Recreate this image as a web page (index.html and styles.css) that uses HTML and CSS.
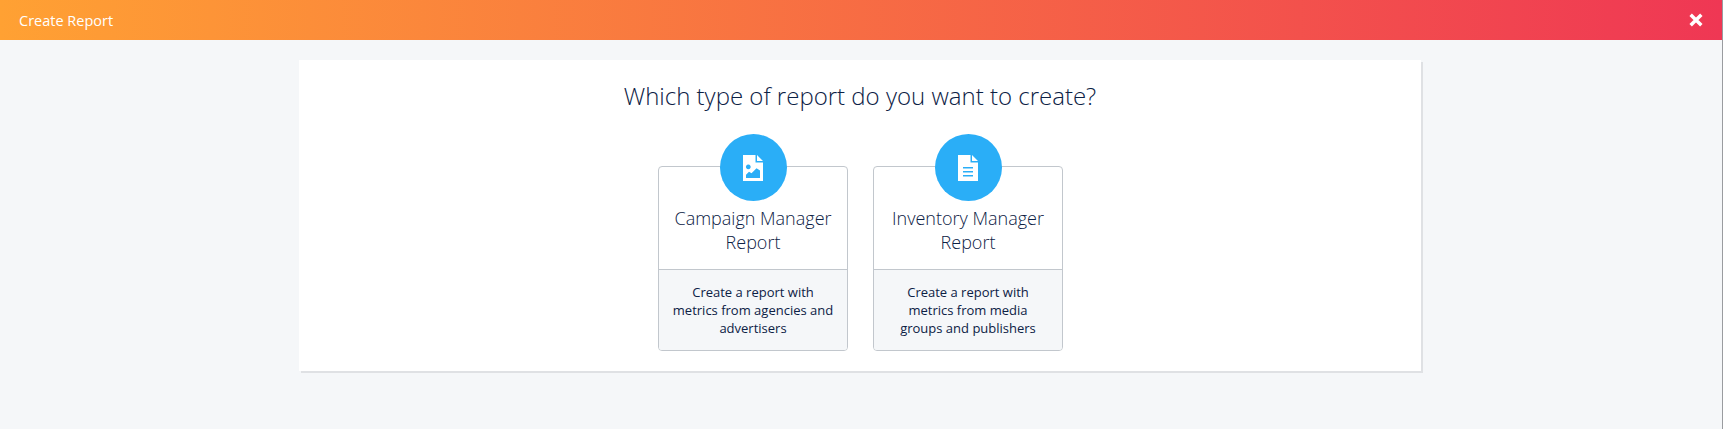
FILE: index.html
```html
<!DOCTYPE html>
<html lang="en">
<head>
<meta charset="utf-8">
<title>Create Report</title>
<link rel="stylesheet" href="styles.css">
</head>
<body>
<header class="topbar">
  <span class="topbar-title">Create Report</span>
  <svg class="close" viewBox="0 0 12 12" aria-label="Close"><path d="M2 2l8 8M10 2l-8 8"/></svg>
</header>
<main class="page">
  <section class="panel">
    <h1 class="question">Which type of report do you want to create?</h1>
    <div class="cards">
      <article class="card">
        <div class="badge">
          <svg class="doc" viewBox="0 0 20 26"><path fill-rule="evenodd" d="M0 0h12.500v7.500H20V26H0zM14 0l6 6h-6zM5.300 9.500a2.400 2.400 0 1 0 .01 0zM3 23h14v-7.500l-3.500-2.300-5 5-2.500-1.500-3 3z"/></svg>
        </div>
        <div class="card-head"><h2 class="card-title">Campaign Manager Report</h2></div>
        <p class="card-body">Create a report with metrics from agencies and advertisers</p>
      </article>
      <article class="card">
        <div class="badge">
          <svg class="doc" viewBox="0 0 20 26"><path fill-rule="evenodd" d="M0 0h12.500v7.500H20V26H0zM14 0l6 6h-6zM5 12v1.600h10V12zM5 16v1.600h10V16zM5 20v1.600h10V20z"/></svg>
        </div>
        <div class="card-head"><h2 class="card-title">Inventory Manager Report</h2></div>
        <p class="card-body">Create a report with metrics from media groups and publishers</p>
      </article>
    </div>
  </section>
</main>
</body>
</html>
```
FILE: styles.css
```css
* { box-sizing: border-box; }
html, body { margin: 0; height: 100%; }
body {
  background: #f5f7f9;
  font-family: "Open Sans", "Liberation Sans", sans-serif;
  color: #0c2145;
  border-right: 1px solid #9a9ca0;
  overflow: hidden;
}
.topbar {
  height: 40px;
  display: flex;
  align-items: center;
  justify-content: space-between;
  padding: 0 18px 0 19px;
  background: linear-gradient(90deg, #ffa133 0%, #ef3754 100%);
  color: #fff;
}
.topbar-title { font-size: 14.500px; }
.close { width: 16px; height: 16px; }
.close path { fill: none; stroke: #fff; stroke-width: 2.6; }
.page {
  display: flex;
  justify-content: center;
  padding: 20px 2px 0 0;
}
.panel {
  width: 1122px;
  height: 311px;
  background: #fff;
  box-shadow: 2px 2px 0 #dfe1e4;
  padding-top: 19px;
}
.question {
  margin: 0;
  text-align: center;
  font-size: 24px;
  line-height: 33px;
  font-weight: 300;
}
.cards {
  display: flex;
  justify-content: center;
  gap: 25px;
  margin-top: 54px;
  padding-left: 1px;
}
.card {
  position: relative;
  width: 190px;
  height: 185px;
  border: 1px solid #c2c7cd;
  border-radius: 4px;
  display: flex;
  flex-direction: column;
}
.badge {
  position: absolute;
  top: -33px;
  left: 50%;
  margin-left: -33.5px;
  width: 67px;
  height: 67px;
  border-radius: 50%;
  background: #2aaef7;
  display: flex;
  align-items: center;
  justify-content: center;
}
.doc { width: 20px; height: 26px; fill: #fff; }
.card-head {
  height: 103px;
  flex: none;
  padding-top: 39px;
  border-bottom: 1px solid #c2c7cd;
}
.card-title {
  margin: 0;
  text-align: center;
  font-size: 18px;
  line-height: 24px;
  font-weight: 300;
}
.card-body {
  flex: 1;
  margin: 0;
  padding: 13px 13px 0;
  background: #f5f7f9;
  border-radius: 0 0 3px 3px;
  text-align: center;
  font-size: 13px;
  line-height: 18px;
}
```
